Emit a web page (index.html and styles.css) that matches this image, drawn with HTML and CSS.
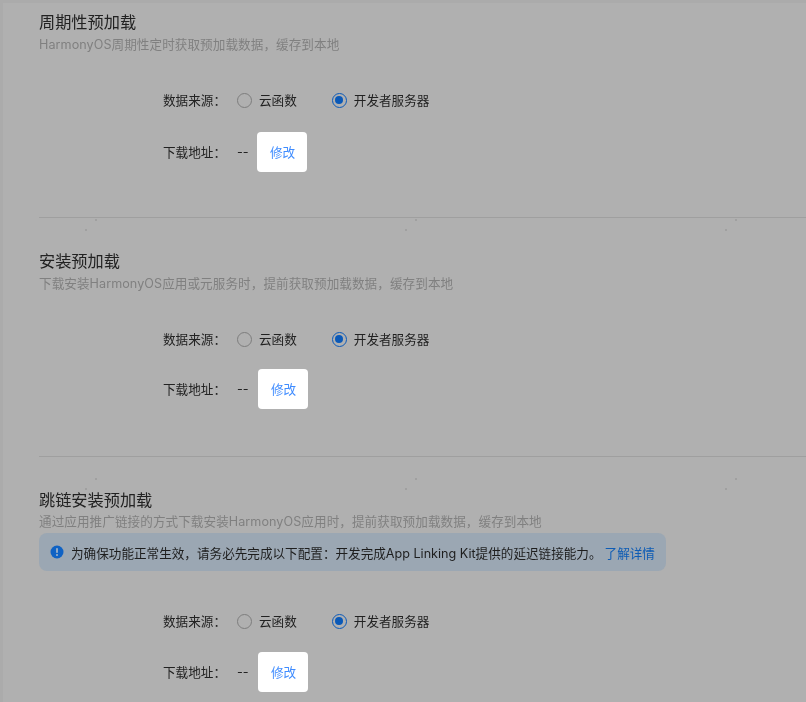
FILE: index.html
```html
<!DOCTYPE html>
<html lang="zh">
<head>
<meta charset="utf-8">
<title>预加载</title>
<link rel="stylesheet" href="styles.css">
</head>
<body>
<main class="page">
  <section class="block first">
    <h2 class="title">周期性预加载</h2>
    <p class="desc">HarmonyOS周期性定时获取预加载数据，缓存到本地</p>
    <div class="form">
      <div class="row"><span class="label">数据来源：</span><span class="radio"></span><span class="opt">云函数</span><span class="radio on"></span><span class="opt">开发者服务器</span></div>
      <div class="row addr"><span class="label">下载地址：</span><span class="val">--</span><button class="btn">修改</button></div>
    </div>
    <i class="speck s1"></i><i class="speck s2"></i><i class="speck s3"></i><i class="speck s4"></i><i class="speck s5"></i><i class="speck s6"></i>
  </section>
  <section class="block second">
    <h2 class="title">安装预加载</h2>
    <p class="desc">下载安装HarmonyOS应用或元服务时，提前获取预加载数据，缓存到本地</p>
    <div class="form">
      <div class="row"><span class="label">数据来源：</span><span class="radio"></span><span class="opt">云函数</span><span class="radio on"></span><span class="opt">开发者服务器</span></div>
      <div class="row addr"><span class="label">下载地址：</span><span class="val">--</span><button class="btn">修改</button></div>
    </div>
  </section>
  <section class="block third">
    <h2 class="title">跳链安装预加载</h2>
    <p class="desc">通过应用推广链接的方式下载安装HarmonyOS应用时，提前获取预加载数据，缓存到本地</p>
    <div class="alert">
      <svg class="alert-icon" width="14" height="14" viewBox="0 0 14 14"><circle cx="7" cy="7" r="6.5" fill="#0f62c4"/><rect x="6.2" y="3" width="1.6" height="5" rx=".8" fill="#b0bcc9"/><circle cx="7" cy="10" r=".95" fill="#b0bcc9"/></svg>
      <span>为确保功能正常生效，请务必先完成以下配置：开发完成App Linking Kit提供的延迟链接能力。</span><a class="link">了解详情</a>
    </div>
    <div class="form">
      <div class="row"><span class="label">数据来源：</span><span class="radio"></span><span class="opt">云函数</span><span class="radio on"></span><span class="opt">开发者服务器</span></div>
      <div class="row addr"><span class="label">下载地址：</span><span class="val">--</span><button class="btn">修改</button></div>
    </div>
    <i class="speck t1"></i><i class="speck t2"></i><i class="speck t3"></i><i class="speck t4"></i><i class="speck t5"></i><i class="speck t6"></i>
  </section>
</main>
</body>
</html>
```
FILE: styles.css
```css
* { box-sizing: border-box; }
html, body { margin: 0; height: 100%; }
body {
  width: 806px; height: 702px; overflow: hidden;
  background: #b0b0b0;
  border: solid #ababab;
  border-width: 3px 0 0 3px;
  color: #222;
  font-family: Inter, "Noto Sans CJK SC", sans-serif;
  font-size: 12.6px;
}
.page { padding: 7px 0 0 36px; filter: blur(0.35px); }
.block { position: relative; border-bottom: 1px solid #9f9f9f; padding-top: 32px; height: 239px; }
.first { height: 208px; padding-top: 1px; }
.third { border-bottom: 0; height: auto; }
.title { margin: 0; font-size: 16.2px; line-height: 22px; font-weight: 400; color: #222; }
.desc { margin: 2px 0 0; font-size: 12.6px; line-height: 20px; color: #808080; white-space: nowrap; letter-spacing: .06px; }
.third .desc { margin-top: 1px; }
.form { margin: 34px 0 0 124px; }
.row { display: flex; align-items: center; height: 20px; white-space: nowrap; }
.addr { margin-top: 23px; height: 40px; }
.addr .label, .addr .val { padding-bottom: 2px; }
.second .addr { margin-top: 21px; }
.third .addr { margin-top: 22px; }
.label { width: 74px; }
.radio { width: 15px; height: 15px; margin-top: 2px; border: 1.2px solid #7c7c7c; border-radius: 50%; margin-right: 7px; flex: none; }
.radio.on { border-color: #0a59b8; position: relative; }
.radio.on::after { content: ""; position: absolute; inset: 2.3px; border-radius: 50%; background: #0a59b8; }
.opt { margin-right: 35px; }
.val { width: 20px; }
.second .val, .third .val { width: 21px; }
.btn {
  width: 50px; height: 40px; border: 0; border-radius: 4px; background: #fff;
  color: #3f8cff; font: inherit; padding: 0 0 2px 1px;
}
.alert {
  display: flex; align-items: center; width: 627px; height: 38px; margin-top: 1px;
  padding-left: 11px; border-radius: 8px; background: #9ba7b3; color: #1e1e1e; white-space: nowrap;
}
.alert-icon { margin-right: 7px; flex: none; }
.link { color: #0e5cb5; margin-left: 3px; }
.third .form { margin-top: 39px; }
.speck { position: absolute; width: 2px; height: 2px; background: #a0a0a0; }
.s1 { left: 56px; top: 209px; }
.s2 { left: 46px; top: 219px; }
.s3 { left: 376px; top: 209px; }
.s4 { left: 366px; top: 219px; }
.s5 { left: 696px; top: 209px; }
.s6 { left: 686px; top: 219px; }
.t1 { left: 56px; top: 21px; }
.t2 { left: 46px; top: 31px; }
.t3 { left: 376px; top: 21px; }
.t4 { left: 366px; top: 31px; }
.t5 { left: 696px; top: 21px; }
.t6 { left: 686px; top: 31px; }
```
